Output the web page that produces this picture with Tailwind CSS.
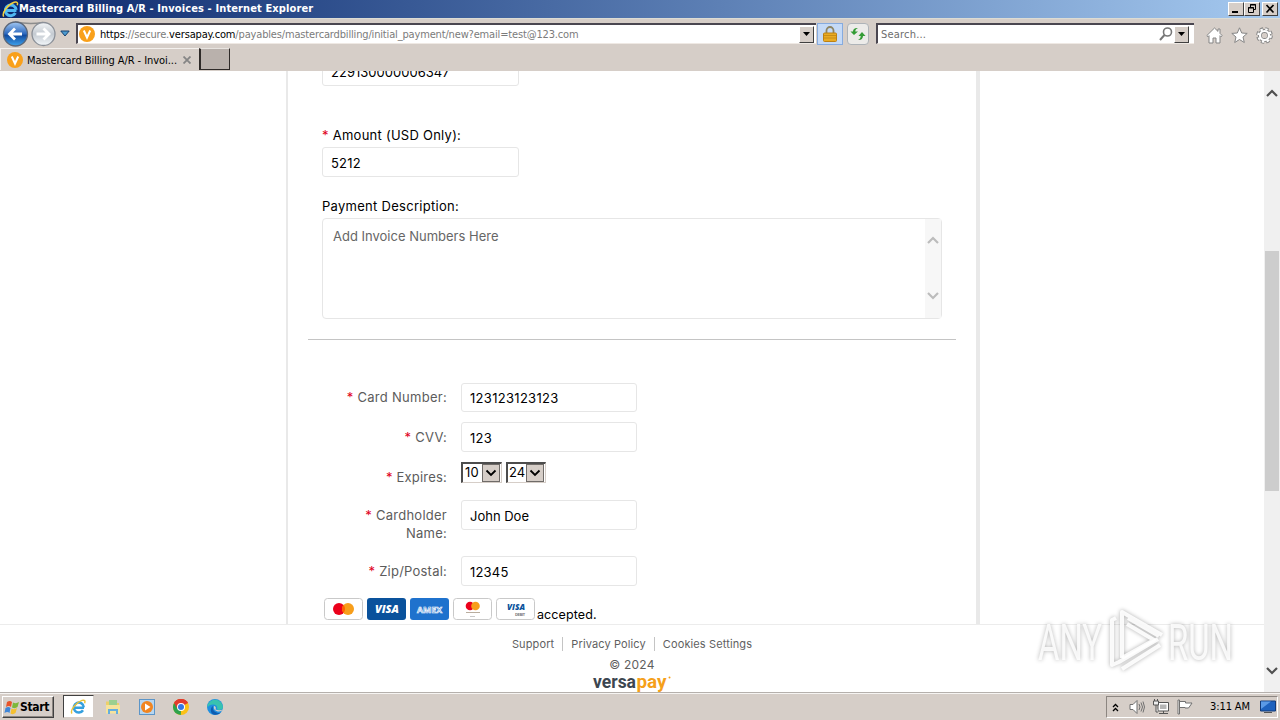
<!DOCTYPE html>
<html lang="en">
<head>
  <meta charset="UTF-8"/>
  <meta name="viewport" content="width=device-width,initial-scale=1.0"/>
  <title>Mastercard Billing A/R - Invoices</title>
  <script src="https://cdn.jsdelivr.net/npm/@tailwindcss/browser@4"></script>
</head>
<body class="relative w-[1280px] h-[720px] overflow-hidden flex flex-col bg-[#d6cec8] text-black font-['DejaVu_Sans_Condensed','Liberation_Sans',sans-serif]">

  <!-- Title bar -->
  <header class="h-[18px] shrink-0 flex items-center bg-linear-to-r from-[#0c266b] to-[#a6caf0]">
    <svg class="ml-[2px] w-[17px] h-[17px]" viewBox="0 0 16 16" fill="none">
      <path d="M13.600 9H4.600M13.300 8.400A5.100 5.100 0 1 0 12.600 11.400" stroke="#4fb8f2" stroke-width="2.800"/>
      <path d="M1.600 14.800C-.6 11 6 3 11.500 1.200c3-.8 3.600.8 2.800 2.800" stroke="#f3cf3d" stroke-width="1.400"/>
    </svg>
    <h1 class="text-[11px] leading-[18px] font-bold text-white whitespace-nowrap tracking-[0.12px]">Mastercard Billing A/R - Invoices - Internet Explorer</h1>
    <div class="ml-auto mr-[2px] flex">
      <button class="w-4 h-[14px] bg-[#d6cec8] border border-t-white border-l-white border-r-[#404040] border-b-[#404040]"><svg class="w-[14px] h-3" viewBox="0 0 14 12"><path d="M3 8h6v2H3z"/></svg></button>
      <button class="w-4 h-[14px] bg-[#d6cec8] border border-t-white border-l-white border-r-[#404040] border-b-[#404040]"><svg class="w-[14px] h-3" viewBox="0 0 14 12" fill="none" stroke="#000"><path d="M5.500 4V1.500h5v5H8.500M5 2h6M3.500 4.500h5v5h-5zM3 5h6"/></svg></button>
      <button class="ml-[2px] w-4 h-[14px] bg-[#d6cec8] border border-t-white border-l-white border-r-[#404040] border-b-[#404040]"><svg class="w-[14px] h-3" viewBox="0 0 14 12" stroke="#000" stroke-width="1.700"><path d="M3.500 2l7 7.500M10.500 2l-7 7.500"/></svg></button>
    </div>
  </header>

  <!-- Navigation row -->
  <nav class="h-[30px] shrink-0 flex items-center border-t border-[#dcdcd4]">
    <svg class="ml-[2px] w-14 h-[28px] shrink-0" viewBox="0 0 56 28">
      <defs>
        <linearGradient id="back" x2="0" y2="1"><stop stop-color="#a3c8f3"/><stop offset=".5" stop-color="#2b67bd"/><stop offset=".55" stop-color="#114a9f"/><stop offset="1" stop-color="#3fa4ee"/></linearGradient>
        <linearGradient id="fwd" x2="0" y2="1"><stop stop-color="#f4f6f8"/><stop offset=".5" stop-color="#c4cad1"/><stop offset="1" stop-color="#f3f7fa"/></linearGradient>
      </defs>
      <path d="M13 2Q27 4.500 41 2.500" fill="none" stroke="#8c8c8c" stroke-width="1.500"/>
      <circle cx="13.500" cy="14" r="12" fill="url(#back)" stroke="#5b6678" stroke-width="1.300"/>
      <path d="M20 14H8M13 8.500L7.500 14l5.500 5.500" fill="none" stroke="#fff" stroke-width="2.800"/>
      <circle cx="41.500" cy="14" r="11.500" fill="url(#fwd)" stroke="#8b9098" stroke-width="1.300"/>
      <path d="M34.500 14h12M41.500 8.500L47 14l-5.500 5.500" fill="none" stroke="#fff" stroke-width="2.800"/>
    </svg>
    <svg class="ml-[2px] w-[10px] h-[7px]" viewBox="0 0 10 7"><path d="M.8 1h8.400L5 6z" fill="#4b9bd0" stroke="#17406e"/></svg>

    <!-- Address field -->
    <div class="ml-[6px] w-[740px] h-[21px] flex items-center bg-white border-t-2 border-l-2 border-[#4a4650] border-b border-b-[#efe9e4]">
      <svg class="ml-[1px] w-4 h-4 shrink-0" viewBox="0 0 16 16"><circle cx="8" cy="8" r="8" fill="#f9a01b"/><path d="M4.800 4.500L8 11.500l3.200-7" fill="none" stroke="#fff" stroke-width="2"/></svg>
      <span class="ml-[5px] pt-px text-[11px] leading-4 whitespace-nowrap text-[#7b7b7b] tracking-[-0.16px]"><span class="text-black">https</span>://secure.<span class="text-black">versapay.com</span>/payables/mastercardbilling/initial_payment/new?email=test@123.com</span>
      <button class="ml-auto mr-[2px] w-[15px] h-[17px] flex items-center justify-center bg-[#d6cec8] border border-t-white border-l-white border-r-[#404040] border-b-[#404040]"><svg class="w-[7px] h-1" viewBox="0 0 7 4"><path d="M0 0h7L3.500 4z"/></svg></button>
    </div>
    <div class="ml-px w-[26px] h-[22px] flex items-center justify-center bg-[#c5daf7] border border-[#86abdf]">
      <svg class="w-[14px] h-4" viewBox="0 0 14 16"><path d="M3.500 8V4.500a3.500 3.500 0 0 1 7 0V8" fill="none" stroke="#8e8564" stroke-width="1.800"/><rect x=".5" y="7" width="13" height="8.500" rx="1" fill="#e9ab24" stroke="#bd8112"/><path d="M1 9.500h12M1 12h12" stroke="#c88d18"/></svg>
    </div>
    <div class="ml-[4px] w-[22px] h-[22px] flex items-center justify-center bg-[#ecebe9] border border-[#aeb3b8] rounded-sm">
      <svg class="w-4 h-4" viewBox="0 0 16 16" fill="#339c35"><path d="M4 9L.5 5.500H3C3 3 5 1.500 8 2 6 3 5.300 4 5.300 5.500H8zM12 6l3.500 4H13c0 2.500-2 4.500-5 4 2-1 2.700-2.500 2.700-4H8.500z"/></svg>
    </div>
    <div class="ml-[7px] w-[318px] h-[21px] flex items-center bg-white border-t-2 border-l-2 border-[#4a4650] border-b border-b-[#efe9e4]">
      <span class="ml-[3px] pt-px text-[11px] leading-4 text-[#6d6d6d] tracking-[0.2px]">Search...</span>
      <svg class="ml-auto w-[14px] h-[14px]" viewBox="0 0 14 14" fill="none" stroke="#777" stroke-width="1.600"><circle cx="8.500" cy="5" r="4"/><path d="M5.500 8L1 13" stroke-width="2"/></svg>
      <button class="ml-[1px] mr-[5px] w-[15px] h-[17px] flex items-center justify-center bg-[#d6cec8] border border-t-white border-l-white border-r-[#404040] border-b-[#404040]"><svg class="w-[7px] h-1" viewBox="0 0 7 4"><path d="M0 0h7L3.500 4z"/></svg></button>
    </div>
    <div class="ml-[12px] mt-[3px] flex gap-[8px]">
      <svg class="w-[17px] h-[17px]" viewBox="0 0 17 17" fill="#fff" stroke="#858585"><path d="M8.500 1L.8 8.600l1.200 1.100 1-1V16h4v-5h3v5h4V8.700l1 1 1.200-1.100L14 6.400V2h-2v2.400z"/></svg>
      <svg class="w-[17px] h-[17px]" viewBox="0 0 17 17" fill="#fff" stroke="#858585"><path d="M8.500.8l2.200 5.200 5.500.4-4.200 3.600 1.300 5.500-4.800-3-4.800 3L5 10 .8 6.400l5.500-.4z"/></svg>
      <svg class="w-[17px] h-[17px]" viewBox="0 0 17 17" fill="none"><circle cx="8.500" cy="8.500" r="6.500" stroke="#858585" stroke-width="3.600" stroke-dasharray="3.100 2"/><circle cx="8.500" cy="8.500" r="4.600" stroke="#858585" stroke-width="4"/><circle cx="8.500" cy="8.500" r="6.300" stroke="#fff" stroke-width="2" stroke-dasharray="2.400 2.550"/><circle cx="8.500" cy="8.500" r="4.500" stroke="#fff" stroke-width="2.200"/><circle cx="8.500" cy="8.500" r="2.500" fill="#d6cec8"/></svg>
    </div>
  </nav>

  <!-- Tabs -->
  <div class="h-[23px] shrink-0 flex items-start">
    <div class="w-[199px] h-[22px] flex items-center border-t border-l border-[#f4f1ee] pt-px">
      <svg class="ml-[6px] w-4 h-4 shrink-0" viewBox="0 0 16 16"><circle cx="8" cy="8" r="8" fill="#f9a01b"/><path d="M4.800 4.500L8 11.500l3.200-7" fill="none" stroke="#fff" stroke-width="2"/></svg>
      <span class="ml-[4px] w-[151px] pt-px text-[11px] leading-4 whitespace-nowrap tracking-[-0.06px]">Mastercard Billing A/R - Invoi...</span>
      <svg class="ml-[5px] w-2 h-2 shrink-0" viewBox="0 0 8 8" stroke="#858585" stroke-width="1.800"><path d="M.5.500l7 7M7.500.500l-7 7"/></svg>
    </div>
    <div class="w-[31px] h-[22px] bg-[#b9b1ac] border-l-2 border-[#2e2a28] border-r border-b border-t border-t-[#e8e4e0]"></div>
  </div>

  <!-- Page viewport -->
  <div class="h-[621px] shrink-0 flex bg-white font-['Inter',sans-serif]">
    <div class="w-[1264px] flex flex-col">
      <main class="h-[553px] overflow-hidden">
        <form class="flow-root ml-[286px] w-[694px] h-[553px] border-l-2 border-r-4 border-[#e9e9e9] pl-[20px] pr-[20px] text-[13px] leading-[18px]">
          <div class="pl-[14px]">
            <div class="-mt-[15px] w-[197px] h-[30px] pl-[8px] pt-[6px] border border-[#e6e6e6] rounded-[3px] tracking-[0.02px]">229130000006347</div>
            <div class="mt-[40px] tracking-[0.25px]"><span class="text-[#e0001b] mr-[4px]">*</span>Amount (USD Only):</div>
            <div class="mt-[3px] w-[197px] h-[30px] pl-[8px] pt-[6px] border border-[#e6e6e6] rounded-[3px] tracking-[0.2px]">5212</div>
            <div class="mt-[20px] tracking-[0.28px]">Payment Description:</div>
            <div class="mt-[3px] w-[620px] h-[101px] flex justify-between border border-[#e6e6e6] rounded-[4px] text-[#666]">
              <span class="pl-[10px] pt-[8px]">Add Invoice Numbers Here</span>
              <div class="w-4 flex flex-col items-center justify-between pt-[17px] pb-[18px] bg-[#f7f7f7]">
                <svg class="w-3 h-2" viewBox="0 0 12 8" fill="none" stroke="#bcbcbc" stroke-width="2.200"><path d="M1 7l5-5 5 5"/></svg>
                <svg class="w-3 h-2" viewBox="0 0 12 8" fill="none" stroke="#bcbcbc" stroke-width="2.200"><path d="M1 1l5 5 5-5"/></svg>
              </div>
            </div>
          </div>
          <hr class="mt-[20px] border-[#c4c4c4]"/>

          <div class="mt-[43px] flex gap-[14px]">
            <div class="w-[139px] pt-[5px] text-right text-[#5c5c5c] tracking-[0.28px]"><span class="text-[#e0001b]">*</span> Card Number:</div>
            <div class="w-[176px] h-[29px] pl-[8px] pt-[5px] border border-[#e6e6e6] rounded-[3px] tracking-[0.3px]">123123123123</div>
          </div>
          <div class="mt-[10px] flex gap-[14px]">
            <div class="w-[139px] pt-[6px] text-right text-[#5c5c5c] tracking-[0.28px]"><span class="text-[#e0001b]">*</span> CVV:</div>
            <div class="w-[176px] h-[30px] pl-[8px] pt-[6px] border border-[#e6e6e6] rounded-[3px] tracking-[0.3px]">123</div>
          </div>
          <div class="mt-[10px] h-[38px] flex gap-[14px]">
            <div class="w-[139px] pt-[6px] text-right text-[#5c5c5c] tracking-[0.2px]"><span class="text-[#e0001b]">*</span> Expires:</div>
            <div class="flex gap-[4px]">
              <div class="w-[41px] h-[21px] flex items-center justify-between pl-[2px] pr-px border-t-2 border-l-2 border-[#4d4d4d] border-r border-b border-r-[#d6cec8] border-b-[#d6cec8]">
                <span class="pb-[2px] tracking-[0.3px]">10</span>
                <span class="w-[18px] h-[18px] flex items-center justify-center bg-[#d6cec8] border border-[#6f6b68]"><svg class="w-3 h-2" viewBox="0 0 12 8" fill="none" stroke="#000" stroke-width="1.800"><path d="M1.500 1.500L6 6l4.500-4.500"/></svg></span>
              </div>
              <div class="w-[40px] h-[21px] flex items-center justify-between pl-px pr-px border-t-2 border-l-2 border-[#4d4d4d] border-r border-b border-r-[#d6cec8] border-b-[#d6cec8]">
                <span class="pb-[2px]">24</span>
                <span class="w-[18px] h-[18px] flex items-center justify-center bg-[#d6cec8] border border-[#6f6b68]"><svg class="w-3 h-2" viewBox="0 0 12 8" fill="none" stroke="#000" stroke-width="1.800"><path d="M1.500 1.500L6 6l4.500-4.500"/></svg></span>
              </div>
            </div>
          </div>
          <div class="h-[56px] flex gap-[14px]">
            <div class="w-[139px] pt-[6px] text-right text-[#5c5c5c] tracking-[0.25px]"><span class="text-[#e0001b]">*</span> Cardholder<br/>Name:</div>
            <div class="w-[176px] h-[30px] pl-[8px] pt-[6px] border border-[#e6e6e6] rounded-[3px]">John Doe</div>
          </div>
          <div class="h-[42px] flex gap-[14px]">
            <div class="w-[139px] pt-[6px] text-right text-[#5c5c5c] tracking-[0.22px]"><span class="text-[#e0001b]">*</span> Zip/Postal:</div>
            <div class="w-[176px] h-[30px] pl-[8px] pt-[6px] border border-[#e6e6e6] rounded-[3px] tracking-[0.2px]">12345</div>
          </div>

          <!-- Accepted cards -->
          <div class="pl-[16px] flex gap-[4px] font-['Open_Sans',sans-serif]">
            <svg class="w-[39px] h-[22px]" viewBox="0 0 39 22"><rect x=".5" y=".5" width="38" height="21" rx="3" fill="#fff" stroke="#c9c9c9"/><circle cx="15" cy="11" r="6" fill="#eb001b"/><circle cx="24" cy="11" r="6" fill="#f79e1b"/><path d="M19.500 7a6 6 0 0 1 0 8 6 6 0 0 1 0-8z" fill="#ff5f00"/></svg>
            <svg class="w-[39px] h-[22px]" viewBox="0 0 39 22"><rect width="39" height="22" rx="3" fill="#0a529c"/><text x="8" y="15" font-size="11" font-weight="800" font-style="italic" fill="#fff" textLength="24" lengthAdjust="spacingAndGlyphs">VISA</text></svg>
            <svg class="w-[39px] h-[22px]" viewBox="0 0 39 22"><rect width="39" height="22" rx="3" fill="#1f72cd"/><text x="7" y="14.500" font-size="9.500" font-weight="700" fill="#1f72cd" stroke="#fff" stroke-width=".7" textLength="25" lengthAdjust="spacingAndGlyphs">AMEX</text></svg>
            <svg class="w-[39px] h-[22px]" viewBox="0 0 39 22"><rect x=".5" y=".5" width="38" height="21" rx="3" fill="#fff" stroke="#c9c9c9"/><circle cx="17" cy="8" r="4.300" fill="#eb001b"/><circle cx="22.500" cy="8" r="4.300" fill="#f79e1b"/><path d="M13 14.500h14" stroke="#b9ad9e"/><path d="M17 18.500h5" stroke="#c8c8c8"/></svg>
            <svg class="w-[39px] h-[22px]" viewBox="0 0 39 22"><rect x=".5" y=".5" width="38" height="21" rx="3" fill="#fff" stroke="#c9c9c9"/><text x="11" y="11.500" font-size="9" font-weight="800" font-style="italic" fill="#0a529c" textLength="18" lengthAdjust="spacingAndGlyphs">VISA</text><text x="19" y="18" font-size="4" font-weight="700" fill="#777" textLength="10">DEBIT</text></svg>
            <span class="-ml-[2px] pt-[8px] font-['Inter',sans-serif] text-[12.5px] tracking-[0.1px]">accepted.</span>
          </div>
        </form>
      </main>

      <footer class="h-[68px] border-t border-[#ececec] text-center text-[#5f5f5f]">
        <div class="mt-[12px] flex justify-center text-[11px] leading-[14px] tracking-[0.12px]">
          <a class="pr-[8px]">Support</a>
          <a class="px-[8px] border-l border-[#c4c4c4]">Privacy Policy</a>
          <a class="pl-[8px] border-l border-[#c4c4c4]">Cookies Settings</a>
        </div>
        <div class="mt-[6px] text-[12px] leading-4 tracking-[0.2px]">© 2024</div>
        <svg class="mx-auto w-[80px] h-[19px] overflow-visible" viewBox="0 0 80 19" font-family="Roboto, sans-serif" font-size="18.500" font-weight="700">
          <text x="1" y="14.500" fill="#3c4650" textLength="43" lengthAdjust="spacingAndGlyphs">versa</text>
          <text x="44.500" y="14.500" fill="#f5a01a" textLength="30" lengthAdjust="spacingAndGlyphs">pay</text>
          <circle cx="77.500" cy="4.500" r="1" fill="#f5a01a"/>
        </svg>
      </footer>
    </div>

    <!-- Page scrollbar -->
    <div class="w-4 flex flex-col items-center bg-[#f0f0f0]">
      <svg class="mt-[18px] w-3 h-2" viewBox="0 0 12 8" fill="none" stroke="#505050" stroke-width="2.200"><path d="M1 7l5-5 5 5"/></svg>
      <div class="mt-[154px] w-[14px] h-[240px] bg-[#cdcdcd]"></div>
      <svg class="mt-auto mb-[17px] w-3 h-2" viewBox="0 0 12 8" fill="none" stroke="#505050" stroke-width="2.200"><path d="M1 1l5 5 5-5"/></svg>
    </div>
  </div>

  <!-- Taskbar -->
  <div class="h-[28px] shrink-0 flex items-start pt-[2px] border-t border-[#b5b0ac] shadow-[inset_0_1px_0_#f6f4f2]">
    <button class="ml-[2px] mt-px w-[52px] h-[22px] flex items-center border border-t-white border-l-white border-r-[#404040] border-b-[#404040] shadow-[inset_-1px_-1px_0_#8c8681]">
      <svg class="ml-[1px] w-4 h-4" viewBox="0 0 16 16"><path d="M3 3q3-2 5 0L7 8Q5 6 2 8z" fill="#e8542a"/><path d="M9 3.500q3 1.500 6-.5l-1.500 5Q11 10 8 8.500z" fill="#7db83a"/><path d="M1.500 9q3-2 5 0l-1 5Q3.500 12 .5 14z" fill="#3f86d8"/><path d="M7.500 9.500q3 1.500 5.500-.5l-1.500 5q-2.500 2-5 .5z" fill="#f5c030"/></svg>
      <span class="text-[12px] leading-4 font-bold tracking-[-0.3px]">Start</span>
    </button>
    <div class="ml-[9px] w-[31px] h-[23px] flex items-center justify-center bg-white border border-t-[#404040] border-l-[#404040] border-r-[#d6cec8] border-b-[#d6cec8]">
      <svg class="w-[17px] h-4" viewBox="0 0 17 16" fill="none"><path d="M14 8.800H5M13.800 8.300A5 5 0 1 0 13 11.300" stroke="#35a0de" stroke-width="2.500"/><path d="M2 14.500C-.5 11 7 3 12 1.400c3-.8 3.400.8 2.600 2.800" stroke="#e9c238" stroke-width="1.400"/></svg>
    </div>
    <svg class="ml-[11px] mt-[4px] w-4 h-4" viewBox="0 0 16 16"><path d="M1 2.500h5l1 1.500h7v10H1z" fill="#eccf6a"/><path d="M4 1h8v5H4z" fill="#9bd08f"/><path d="M1 6h14v8.500H1z" fill="#f6e39b"/><path d="M3 15V10h10v5h-2v-3H5v3z" fill="#65aede"/></svg>
    <svg class="ml-[18px] mt-[4px] w-4 h-4" viewBox="0 0 16 16"><rect x=".5" y=".5" width="15" height="15" fill="#b7d6f0" stroke="#5c95c8"/><circle cx="8" cy="8" r="6" fill="#f18521"/><path d="M6 4.500v7L11.500 8z" fill="#fff"/></svg>
    <svg class="ml-[18px] mt-[4px] w-4 h-4" viewBox="0 0 16 16"><circle cx="8" cy="8" r="8" fill="#fbc116"/><path d="M8 8L1.070 4A8 8 0 0 1 14.930 4z" fill="#e23b2e"/><path d="M8 8l-.2 8A8 8 0 0 1 1.070 4z" fill="#2da24c"/><path d="M8 4h6.930A8 8 0 0 0 1.070 4L4.500 10z" fill="#e23b2e"/><circle cx="8" cy="8" r="4" fill="#fff"/><circle cx="8" cy="8" r="3" fill="#3577e5"/></svg>
    <svg class="ml-[18px] mt-[4px] w-4 h-4" viewBox="0 0 16 16"><circle cx="8" cy="8" r="8" fill="#1f8fe0"/><path d="M.5 6A8 8 0 0 1 16 8c0 3-4 3.500-6 2.500 1-3-1-5-4-5-2.500 0-4.500 1-5.500 3z" fill="#38c2b0"/><path d="M6 7c-1 4 2 7 6 7 1 0 2-.5 2.500-1a8 8 0 0 1-8 2.500C3 14 3 9 6 7z" fill="#0f5cb0"/><path d="M8.500 10.500c1-2-.2-3.500-1.500-3.500-.8 3 1.500 5.500 5 5.500 1.500 0 2.800-.7 4-2-2.500 1-5.500.8-7.500 0z" fill="#d6cec8"/></svg>

    <!-- Notification area -->
    <div class="ml-auto mr-[2px] mt-px w-[172px] h-[22px] flex items-center border border-t-[#8c8681] border-l-[#8c8681] border-r-white border-b-white">
      <svg class="ml-[5px] w-[7px] h-[9px]" viewBox="0 0 7 9" fill="none" stroke="#000" stroke-width="1.300"><path d="M1 4l2.500-2.500L6 4M1 8l2.500-2.500L6 8"/></svg>
      <svg class="ml-[10px] w-4 h-4" viewBox="0 0 16 16" fill="none" stroke="#707070"><path d="M1 5.500h3l4-4v13l-4-4H1z" fill="#fff"/><path d="M10 5q2 3 0 6M12 3.500q3 4.500 0 9M14 2.500q3 5.500 0 11"/></svg>
      <svg class="ml-[8px] w-4 h-4" viewBox="0 0 16 16" fill="#eee" stroke="#555"><path d="M5 3.500h10.500v8.500H5z" fill="#fff"/><path d="M7 5.500h6.500V10H7z" fill="#b5b5b5" stroke="none"/><path d="M6 14.500h9M10.500 12v2.500M1.500 0v2M4.500 0v2M.5 2h5v4h-5zM3 6v7h2" /></svg>
      <svg class="ml-[8px] w-4 h-4" viewBox="0 0 16 16" fill="#fff" stroke="#707070"><path d="M1 1h1.500v14H1zM2.500 2.500h6v1.500h6.500l-2 3-1.500 2H8V8.500H2.500z"/></svg>
      <span class="ml-[17px] text-[11px] leading-4 whitespace-nowrap tracking-[-0.1px]">3:11 AM</span>
      <svg class="ml-auto mr-px w-4 h-[14px]" viewBox="0 0 16 14"><path d="M.5 1h15v10H.5z" fill="#1e62be" stroke="#123a78"/><path d="M1 1.500h10L1 9z" fill="#5b9ae6"/><path d="M4 12.500h8" stroke="#555"/></svg>
    </div>
  </div>

  <!-- Watermark -->
  <svg class="absolute left-[1030px] top-[605px] w-[210px] h-[72px] overflow-visible drop-shadow-[0_0_2px_#00000059]" viewBox="0 0 210 72" font-family="Roboto, sans-serif" font-size="50" fill="#fff" fill-opacity=".85">
    <text x="8" y="55" textLength="64" lengthAdjust="spacingAndGlyphs">ANY</text>
    <g fill="none" stroke="#fff" stroke-opacity=".9" stroke-width="4" stroke-linejoin="round">
      <path d="M92 53V7l40 23M98 13l31 18"/>
      <path d="M86 13l-4 2v45l7-3 39-23M92 64l38-24"/>
      <path d="M92 53l32-18-27-16"/>
    </g>
    <text x="138" y="55" textLength="65" lengthAdjust="spacingAndGlyphs">RUN</text>
  </svg>
</body>
</html>
